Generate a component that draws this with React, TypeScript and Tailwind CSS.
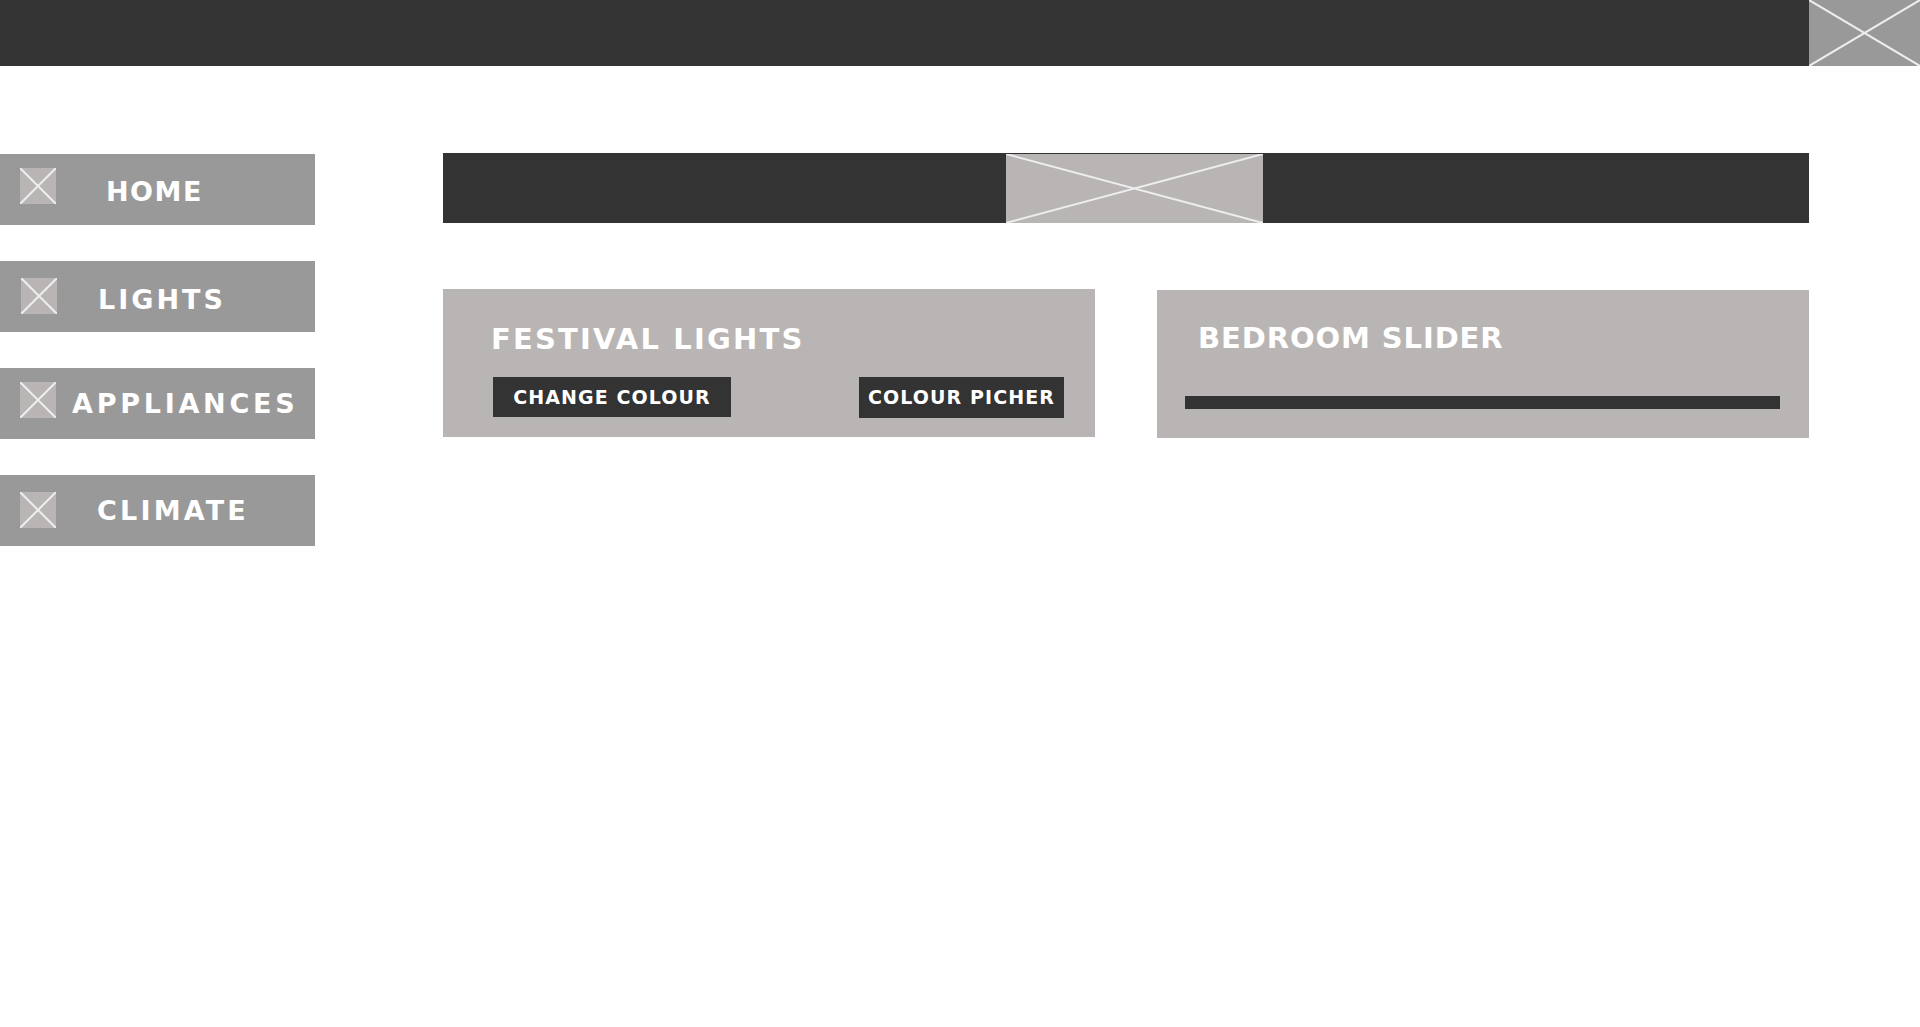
const Placeholder = ({ className }: { className: string }) => (
  <svg className={className} viewBox="0 0 100 100" preserveAspectRatio="none" aria-hidden="true">
    <line x1="0" y1="0" x2="100" y2="100" stroke="#eeeeee" strokeWidth="2" vectorEffect="non-scaling-stroke" />
    <line x1="100" y1="0" x2="0" y2="100" stroke="#eeeeee" strokeWidth="2" vectorEffect="non-scaling-stroke" />
  </svg>
);

const font = "font-['DejaVu_Sans',sans-serif] font-bold text-white whitespace-nowrap leading-none";

export default function App() {
  return (
    <div className={`min-h-screen bg-white ${font}`}>
      <header className="flex h-[66px]">
        <div className="flex-1 bg-[#333333]" />
        <Placeholder className="w-[111px] h-[66px] bg-[#999999]" />
      </header>
      <div className="flex pt-[87px]">
        <nav className="w-[315px] mt-px flex flex-col gap-[36px]">
          <a className="h-[71px] bg-[#999999] flex items-center pl-[20px]">
            <Placeholder className="w-[36px] h-[36px] mb-[7px] bg-[#b9b5b4]" />
            <span className="ml-[50px] mt-[3px] text-[27px] tracking-[1.5px]">HOME</span>
          </a>
          <a className="h-[71px] bg-[#999999] flex items-center pl-[21px]">
            <Placeholder className="w-[36px] h-[36px] mb-[1px] bg-[#b9b5b4]" />
            <span className="ml-[41px] mt-[5px] text-[27px] tracking-[3px]">LIGHTS</span>
          </a>
          <a className="h-[71px] bg-[#999999] flex items-center pl-[20px]">
            <Placeholder className="w-[36px] h-[36px] mb-[7px] bg-[#b9b5b4]" />
            <span className="ml-[16px] mt-[-1px] text-[27px] tracking-[3.75px]">APPLIANCES</span>
          </a>
          <a className="h-[71px] bg-[#999999] flex items-center pl-[20px]">
            <Placeholder className="w-[36px] h-[36px] mb-[1px] bg-[#b9b5b4]" />
            <span className="ml-[41px] text-[27px] tracking-[3.2px]">CLIMATE</span>
          </a>
        </nav>
        <main className="ml-[128px] w-[1366px] flex flex-col">
          <div className="flex h-[70px] bg-[#333333]">
            <div className="w-[563px]" />
            <Placeholder className="w-[257px] h-[69px] mt-px bg-[#b9b5b4]" />
          </div>
          <div className="mt-[66px] flex gap-[62px] items-start">
            <section className="w-[652px] h-[148px] bg-[#b9b5b4] flex flex-col">
              <h2 className="ml-[48px] mt-[36px] text-[29px] tracking-[2.2px]">FESTIVAL LIGHTS</h2>
              <div className="flex ml-[50px] mt-[23px]">
                <button className="w-[238px] h-[40px] bg-[#333333] text-[19px] tracking-[1.1px] flex items-center justify-center">CHANGE COLOUR</button>
                <button className="ml-[128px] w-[205px] h-[41px] bg-[#333333] text-[19px] tracking-[1.1px] flex items-center justify-center">COLOUR PICHER</button>
              </div>
            </section>
            <section className="mt-px w-[652px] h-[148px] bg-[#b9b5b4] flex flex-col">
              <h2 className="ml-[41px] mt-[34px] text-[29px] tracking-[0.9px]">BEDROOM SLIDER</h2>
              <div className="ml-[28px] mt-[43px] w-[595px] h-[13px] bg-[#333333]" />
            </section>
          </div>
        </main>
      </div>
    </div>
  );
}
